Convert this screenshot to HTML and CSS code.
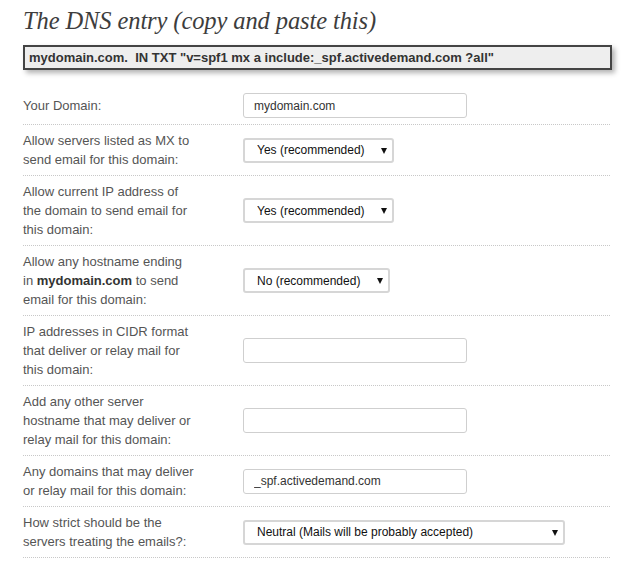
FILE: index.html
```html
<!DOCTYPE html>
<html>
<head>
<meta charset="utf-8">
<link rel="stylesheet" href="styles.css">
</head>
<body>
<div class="page">
  <h2 class="title">The DNS entry (copy and paste this)</h2>
  <div class="record">mydomain.com.  IN TXT "v=spf1 mx a include:_spf.activedemand.com ?all"</div>

  <div class="form">
    <div class="row">
      <div class="label">Your Domain:</div>
      <div class="field"><input class="text" type="text" value="mydomain.com"></div>
    </div>
    <div class="row">
      <div class="label">Allow servers listed as MX to<br>send email for this domain:</div>
      <div class="field"><span class="sel"><select class="select sel-yes"><option>Yes (recommended)</option></select></span></div>
    </div>
    <div class="row">
      <div class="label">Allow current IP address of<br>the domain to send email for<br>this domain:</div>
      <div class="field"><span class="sel"><select class="select sel-yes"><option>Yes (recommended)</option></select></span></div>
    </div>
    <div class="row">
      <div class="label">Allow any hostname ending<br>in <b>mydomain.com</b> to send<br>email for this domain:</div>
      <div class="field"><span class="sel"><select class="select sel-no"><option>No (recommended)</option></select></span></div>
    </div>
    <div class="row">
      <div class="label">IP addresses in CIDR format<br>that deliver or relay mail for<br>this domain:</div>
      <div class="field"><input class="text" type="text" value=""></div>
    </div>
    <div class="row">
      <div class="label">Add any other server<br>hostname that may deliver or<br>relay mail for this domain:</div>
      <div class="field"><input class="text" type="text" value=""></div>
    </div>
    <div class="row">
      <div class="label">Any domains that may deliver<br>or relay mail for this domain:</div>
      <div class="field"><input class="text" type="text" value="_spf.activedemand.com"></div>
    </div>
    <div class="row">
      <div class="label">How strict should be the<br>servers treating the emails?:</div>
      <div class="field"><span class="sel"><select class="select sel-wide"><option>Neutral (Mails will be probably accepted)</option></select></span></div>
    </div>
  </div>
</div>
</body>
</html>
```
FILE: styles.css
```css
html, body {
  margin: 0;
  padding: 0;
  background: #fff;
}
.page {
  padding: 0 0 0 23px;
  font-family: "Liberation Sans", Arial, sans-serif;
}
.title {
  margin: 6px 0 9px 0;
  font-family: "Liberation Serif", "Times New Roman", serif;
  font-style: italic;
  font-weight: normal;
  font-size: 24.5px;
  line-height: 30px;
  color: #3d3d3d;
  letter-spacing: -0.1px;
}
.record {
  box-sizing: border-box;
  width: 589px;
  height: 25px;
  border: 2px solid #444;
  background: #eeeeee;
  padding: 1px 4px 0 4px;
  font-weight: bold;
  font-size: 13px;
  line-height: 20px;
  color: #333;
  white-space: pre;
  box-shadow: 3px 3px 5px rgba(0, 0, 0, 0.3);
  margin-bottom: 17px;
}
.form {
  width: 587px;
}
.row {
  display: grid;
  grid-template-columns: 220px 1fr;
  align-items: center;
  padding: 6px 0;
  border-bottom: 1px dotted #c8c8c8;
}
.label {
  font-size: 13px;
  line-height: 19px;
  color: #555;
}
.label b {
  color: #333;
}
.field {
  display: flex;
  align-items: center;
}
.text {
  box-sizing: border-box;
  width: 224px;
  height: 25px;
  margin: 0;
  border: 1px solid #cfcfcf;
  border-radius: 3px;
  padding: 0 10px;
  font-family: "Liberation Sans", Arial, sans-serif;
  font-size: 12px;
  color: #333;
  background: #fff;
  outline: none;
}
.sel {
  position: relative;
  display: inline-block;
}
.sel::after {
  content: "";
  position: absolute;
  right: 7px;
  top: 10px;
  width: 0;
  height: 0;
  border-left: 3.5px solid transparent;
  border-right: 3.5px solid transparent;
  border-top: 6px solid #111;
  pointer-events: none;
}
.select {
  -webkit-appearance: none;
  appearance: none;
  box-sizing: border-box;
  height: 25px;
  margin: 0;
  border: 2px solid #d6d6d6;
  border-radius: 3px;
  padding: 0 0 0 12px;
  background: #fff;
  font-family: "Liberation Sans", Arial, sans-serif;
  font-size: 12px;
  color: #111;
  outline: none;
}
.sel-yes { width: 151px; }
.sel-no { width: 147px; }
.sel-wide { width: 322px; }
```
